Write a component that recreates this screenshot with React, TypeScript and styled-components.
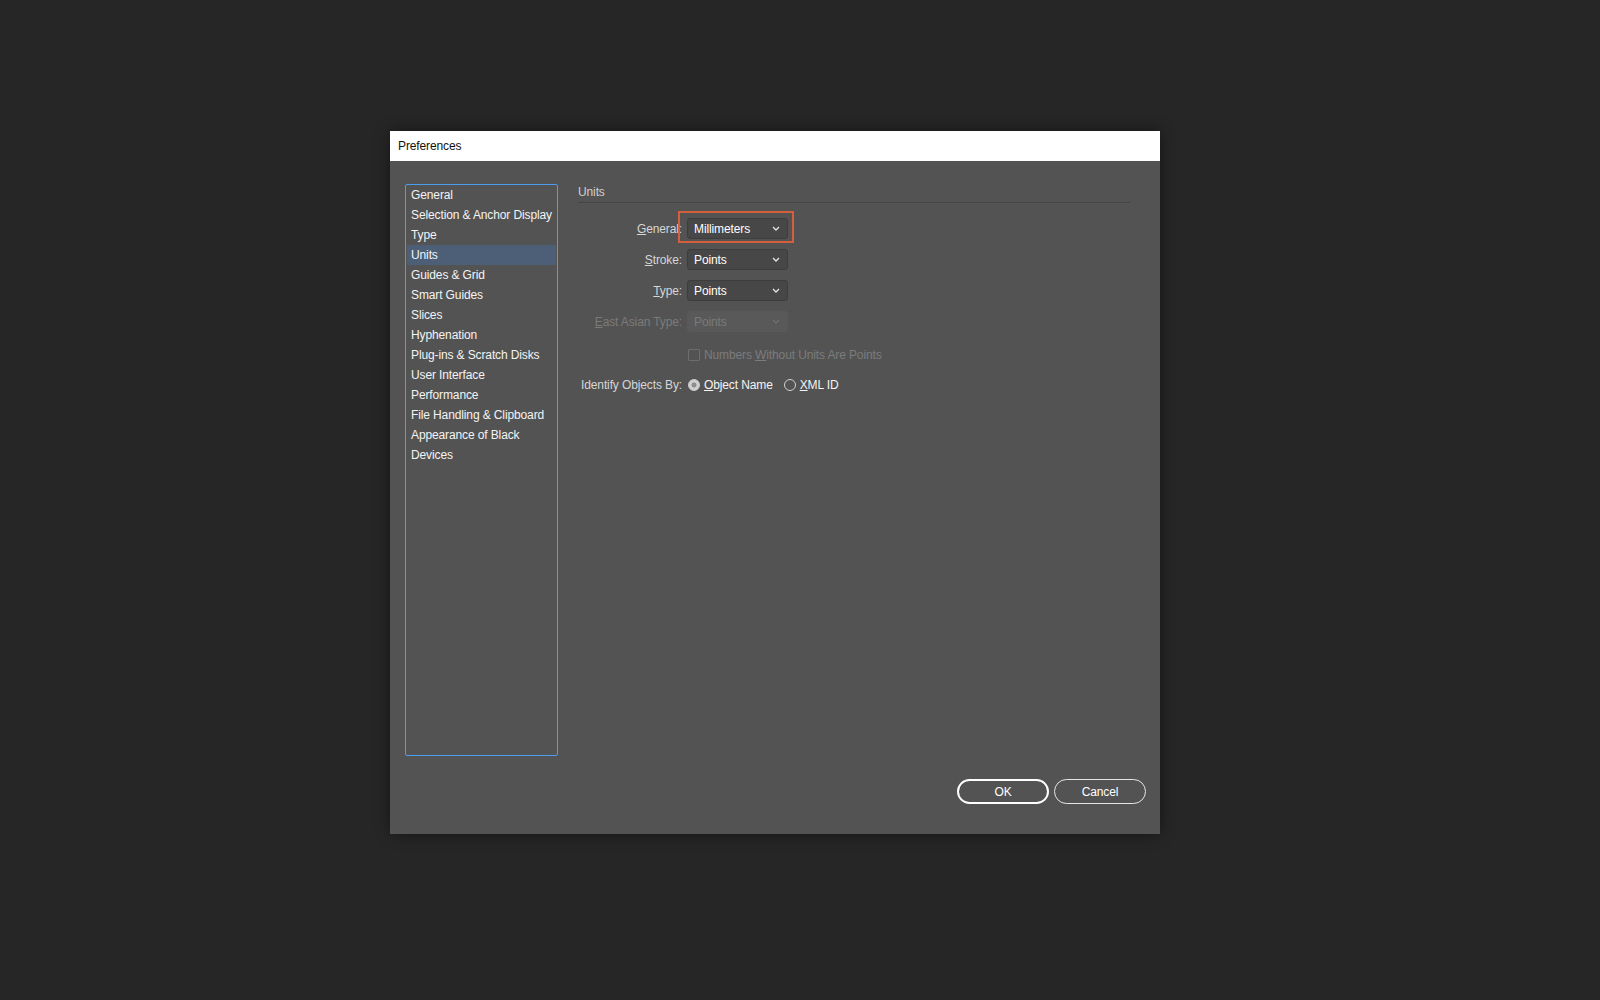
import React from "react";
import styled, { createGlobalStyle } from "styled-components";

const GlobalStyle = createGlobalStyle`
  html, body {
    margin: 0;
    padding: 0;
    background: #262626;
  }
  body {
    font-family: "Liberation Sans", Arial, sans-serif;
    font-size: 12px;
    letter-spacing: -0.12px;
  }
  * {
    box-sizing: border-box;
  }
`;

const navItems = [
  "General",
  "Selection & Anchor Display",
  "Type",
  "Units",
  "Guides & Grid",
  "Smart Guides",
  "Slices",
  "Hyphenation",
  "Plug-ins & Scratch Disks",
  "User Interface",
  "Performance",
  "File Handling & Clipboard",
  "Appearance of Black",
  "Devices",
];

const Chevron = ({ color }: { color: string }) => (
  <svg width="8" height="5" viewBox="0 0 8 5">
    <polyline
      points="1,1 4,4 7,1"
      fill="none"
      stroke={color}
      strokeWidth="1.3"
    />
  </svg>
);

type SelectProps = {
  value: string;
  disabled?: boolean;
};

const Select = ({ value, disabled }: SelectProps) => (
  <SelectBox disabled={disabled}>
    <span>{value}</span>
    <Chevron color={disabled ? "#6f6f6f" : "#e6e6e6"} />
  </SelectBox>
);

const App = () => (
  <>
    <GlobalStyle />
    <Desktop>
      <Dialog>
        <TitleBar>Preferences</TitleBar>
        <Body>
          <Main>
            <Sidebar>
              {navItems.map((item) => (
                <NavItem key={item} selected={item === "Units"}>
                  {item}
                </NavItem>
              ))}
            </Sidebar>

            <Content>
              <Heading>Units</Heading>
              <Form>
                <FieldRow>
                  <Label>
                    <u>G</u>eneral:
                  </Label>
                  <SelectWrap>
                    <Select value="Millimeters" />
                    <Highlight />
                  </SelectWrap>
                </FieldRow>
                <FieldRow>
                  <Label>
                    <u>S</u>troke:
                  </Label>
                  <Select value="Points" />
                </FieldRow>
                <FieldRow>
                  <Label>
                    <u>T</u>ype:
                  </Label>
                  <Select value="Points" />
                </FieldRow>
                <FieldRow>
                  <Label disabled>
                    <u>E</u>ast Asian Type:
                  </Label>
                  <Select value="Points" disabled />
                </FieldRow>

                <CheckRow>
                  <CheckBox />
                  <CheckLabel>
                    Numbers <u>W</u>ithout Units Are Points
                  </CheckLabel>
                </CheckRow>

                <RadioRow>
                  <Label>Identify Objects By:</Label>
                  <RadioOption>
                    <Radio checked />
                    <RadioText>
                      <u>O</u>bject Name
                    </RadioText>
                  </RadioOption>
                  <RadioOption>
                    <Radio />
                    <RadioText>
                      <u>X</u>ML ID
                    </RadioText>
                  </RadioOption>
                </RadioRow>
              </Form>
            </Content>
          </Main>

          <Footer>
            <Button primary>OK</Button>
            <Button>Cancel</Button>
          </Footer>
        </Body>
      </Dialog>
    </Desktop>
  </>
);

export default App;

const Desktop = styled.div`
  width: 1600px;
  height: 1000px;
  padding: 131px 0 0 390px;
`;

const Dialog = styled.div`
  width: 770px;
  height: 703px;
  background: #535353;
  display: flex;
  flex-direction: column;
  box-shadow: 0 0 14px rgba(0, 0, 0, 0.45);
`;

const TitleBar = styled.div`
  height: 30px;
  background: #ffffff;
  color: #111;
  display: flex;
  align-items: center;
  padding-left: 8px;
  font-size: 12px;
`;

const Body = styled.div`
  flex: 1;
  display: flex;
  flex-direction: column;
  padding: 23px 14px 30px 15px;
`;

const Main = styled.div`
  display: flex;
  gap: 20px;
`;

const Sidebar = styled.div`
  width: 153px;
  height: 572px;
  border: 1px solid #4b9ded;
  border-radius: 2px;
  padding: 0 1px;
`;

const NavItem = styled.div<{ selected?: boolean }>`
  height: 20px;
  line-height: 20px;
  padding-left: 4px;
  color: #f4f4f4;
  white-space: nowrap;
  background: ${({ selected }) => (selected ? "#4c5f77" : "transparent")};
`;

const Content = styled.div`
  flex: 1;
  margin-right: 16px;
`;

const Heading = styled.div`
  height: 19px;
  line-height: 17px;
  color: #cfcfcf;
  border-bottom: 1px solid #454545;
`;

const Form = styled.div`
  display: flex;
  flex-direction: column;
  gap: 10px;
  margin-top: 15px;
`;

const FieldRow = styled.div`
  display: flex;
  align-items: center;
  gap: 5px;
  height: 21px;
`;

const Label = styled.div<{ disabled?: boolean }>`
  width: 104px;
  text-align: right;
  white-space: nowrap;
  color: ${({ disabled }) => (disabled ? "#7b7b7b" : "#d6d6d6")};
`;

const SelectWrap = styled.div`
  position: relative;
`;

const SelectBox = styled.div<{ disabled?: boolean }>`
  width: 101px;
  height: 21px;
  display: flex;
  align-items: center;
  justify-content: space-between;
  padding: 0 7px 0 6px;
  border-radius: 3px;
  background: ${({ disabled }) => (disabled ? "#595959" : "#474747")};
  border: 1px solid ${({ disabled }) => (disabled ? "#595959" : "#3d3d3d")};
  color: ${({ disabled }) => (disabled ? "#7a7a7a" : "#ffffff")};
`;

const Highlight = styled.div`
  position: absolute;
  left: -9px;
  top: -7px;
  right: -6px;
  bottom: -4px;
  border: 2px solid #d3603d;
  pointer-events: none;
`;

const CheckRow = styled.div`
  display: flex;
  align-items: center;
  gap: 4px;
  height: 12px;
  margin-top: 7px;
  padding-left: 110px;
`;

const CheckBox = styled.div`
  width: 12px;
  height: 12px;
  border: 1px solid #6d6d6d;
  border-radius: 1px;
`;

const CheckLabel = styled.div`
  color: #7c7c7c;
  white-space: nowrap;
`;

const RadioRow = styled.div`
  display: flex;
  align-items: center;
  height: 18px;
  margin-top: 5px;
  gap: 6px;
`;

const RadioOption = styled.div`
  display: flex;
  align-items: center;
  gap: 4px;
  margin-right: 5px;
`;

const Radio = styled.div<{ checked?: boolean }>`
  width: 12px;
  height: 12px;
  border-radius: 50%;
  border: 1px solid #d0d0d0;
  background: ${({ checked }) =>
    checked
      ? "radial-gradient(circle, #8e8e8e 0 2.2px, #cfcfcf 2.8px)"
      : "transparent"};
`;

const RadioText = styled.div`
  color: #f4f4f4;
  white-space: nowrap;
`;

const Footer = styled.div`
  margin-top: auto;
  display: flex;
  justify-content: flex-end;
  gap: 5px;
`;

const Button = styled.button<{ primary?: boolean }>`
  width: 92px;
  height: 25px;
  border-radius: 13px;
  background: transparent;
  color: #ffffff;
  font-family: "Liberation Sans", Arial, sans-serif;
  font-size: 12px;
  letter-spacing: -0.12px;
  padding: 0;
  cursor: pointer;
  border: ${({ primary }) => (primary ? "2px solid #ffffff" : "1px solid #e6e6e6")};
`;
